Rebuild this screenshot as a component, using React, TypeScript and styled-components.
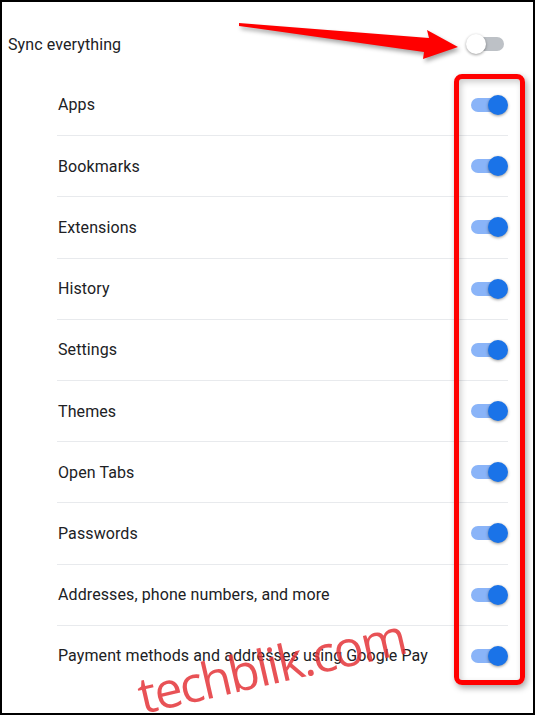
import * as React from 'react';
import styled, { createGlobalStyle } from 'styled-components';

const GlobalStyle = createGlobalStyle`
  html, body {
    margin: 0;
    padding: 0;
    background: #ffffff;
  }
  body {
    font-family: Roboto, "Liberation Sans", Arial, sans-serif;
  }
`;

const Frame = styled.div`
  position: relative;
  box-sizing: border-box;
  width: 535px;
  height: 715px;
  border: 2px solid #000;
  background: #fff;
  overflow: hidden;
`;

const Header = styled.div`
  display: flex;
  align-items: center;
  justify-content: space-between;
  height: 60px;
  margin-top: 12px;
  padding: 0 29px 0 6px;
`;

const Label = styled.span`
  font-size: 16px;
  color: #202124;
  letter-spacing: 0.1px;
`;

const List = styled.div`
  display: flex;
  flex-direction: column;
  margin: 0 25px 0 55px;
`;

const Row = styled.div<{ $first?: boolean }>`
  box-sizing: border-box;
  display: flex;
  align-items: center;
  justify-content: space-between;
  height: 61.2px;
  border-top: ${p => (p.$first ? 'none' : '1px solid #e8eaed')};
  padding-left: 1px;
`;

const Switch = styled.div`
  position: relative;
  width: 38px;
  height: 20px;
  flex: none;
  display: flex;
  align-items: center;
`;

const Track = styled.div<{ $on: boolean }>`
  position: absolute;
  left: ${p => (p.$on ? '1px' : '6px')};
  right: ${p => (p.$on ? '3px' : '0')};
  height: 14px;
  border-radius: 7px;
  background: ${p => (p.$on ? '#8ab4f8' : '#bdc1c6')};
`;

const Knob = styled.div<{ $on: boolean }>`
  position: absolute;
  top: 0;
  left: ${p => (p.$on ? '18px' : '0')};
  width: 20px;
  height: 20px;
  border-radius: 50%;
  background: ${p => (p.$on ? '#1a73e8' : '#ffffff')};
  box-shadow: 0 1px 3px rgba(0, 0, 0, 0.4);
`;

const Highlight = styled.div`
  position: absolute;
  left: 452px;
  top: 72px;
  width: 71px;
  height: 611px;
  box-sizing: border-box;
  border: 5px solid #ff0000;
  border-radius: 8px;
  box-shadow: 2px 3px 6px rgba(0, 0, 0, 0.35), inset 2px 3px 6px rgba(0, 0, 0, 0.2);
  pointer-events: none;
`;

const Arrow = styled.svg`
  position: absolute;
  left: 0;
  top: 0;
  overflow: visible;
  filter: drop-shadow(2px 3px 2px rgba(0, 0, 0, 0.35));
  pointer-events: none;
`;

const Watermark = styled.div`
  position: absolute;
  left: 269px;
  top: 663px;
  transform: translate(-50%, -50%) rotate(-13deg);
  font-family: "Open Sans", "Liberation Sans", sans-serif;
  font-size: 50px;
  letter-spacing: -2px;
  line-height: 1;
  color: rgba(228, 52, 56, 0.85);
  white-space: nowrap;
  pointer-events: none;
`;

function Toggle({ on }: { on: boolean }) {
  return (
    <Switch>
      <Track $on={on} />
      <Knob $on={on} />
    </Switch>
  );
}

const items = [
  'Apps',
  'Bookmarks',
  'Extensions',
  'History',
  'Settings',
  'Themes',
  'Open Tabs',
  'Passwords',
  'Addresses, phone numbers, and more',
  'Payment methods and addresses using Google Pay'
];

export default function App() {
  return (
    <Frame>
      <GlobalStyle />
      <Header>
        <Label>{'Sync everything'}</Label>
        <Toggle on={false} />
      </Header>
      <List>
        {items.map((name, i) => (
          <Row key={name} $first={i === 0}>
            <Label>{name}</Label>
            <Toggle on />
          </Row>
        ))}
      </List>
      <Highlight />
      <Arrow width="535" height="715" viewBox="0 0 535 715">
        <polygon
          points="237,21 427,36 425,28 456,45 421,57 422,50 237,24"
          fill="#ff0000"
        />
      </Arrow>
      <Watermark>{'techblik.com'}</Watermark>
    </Frame>
  );
}
